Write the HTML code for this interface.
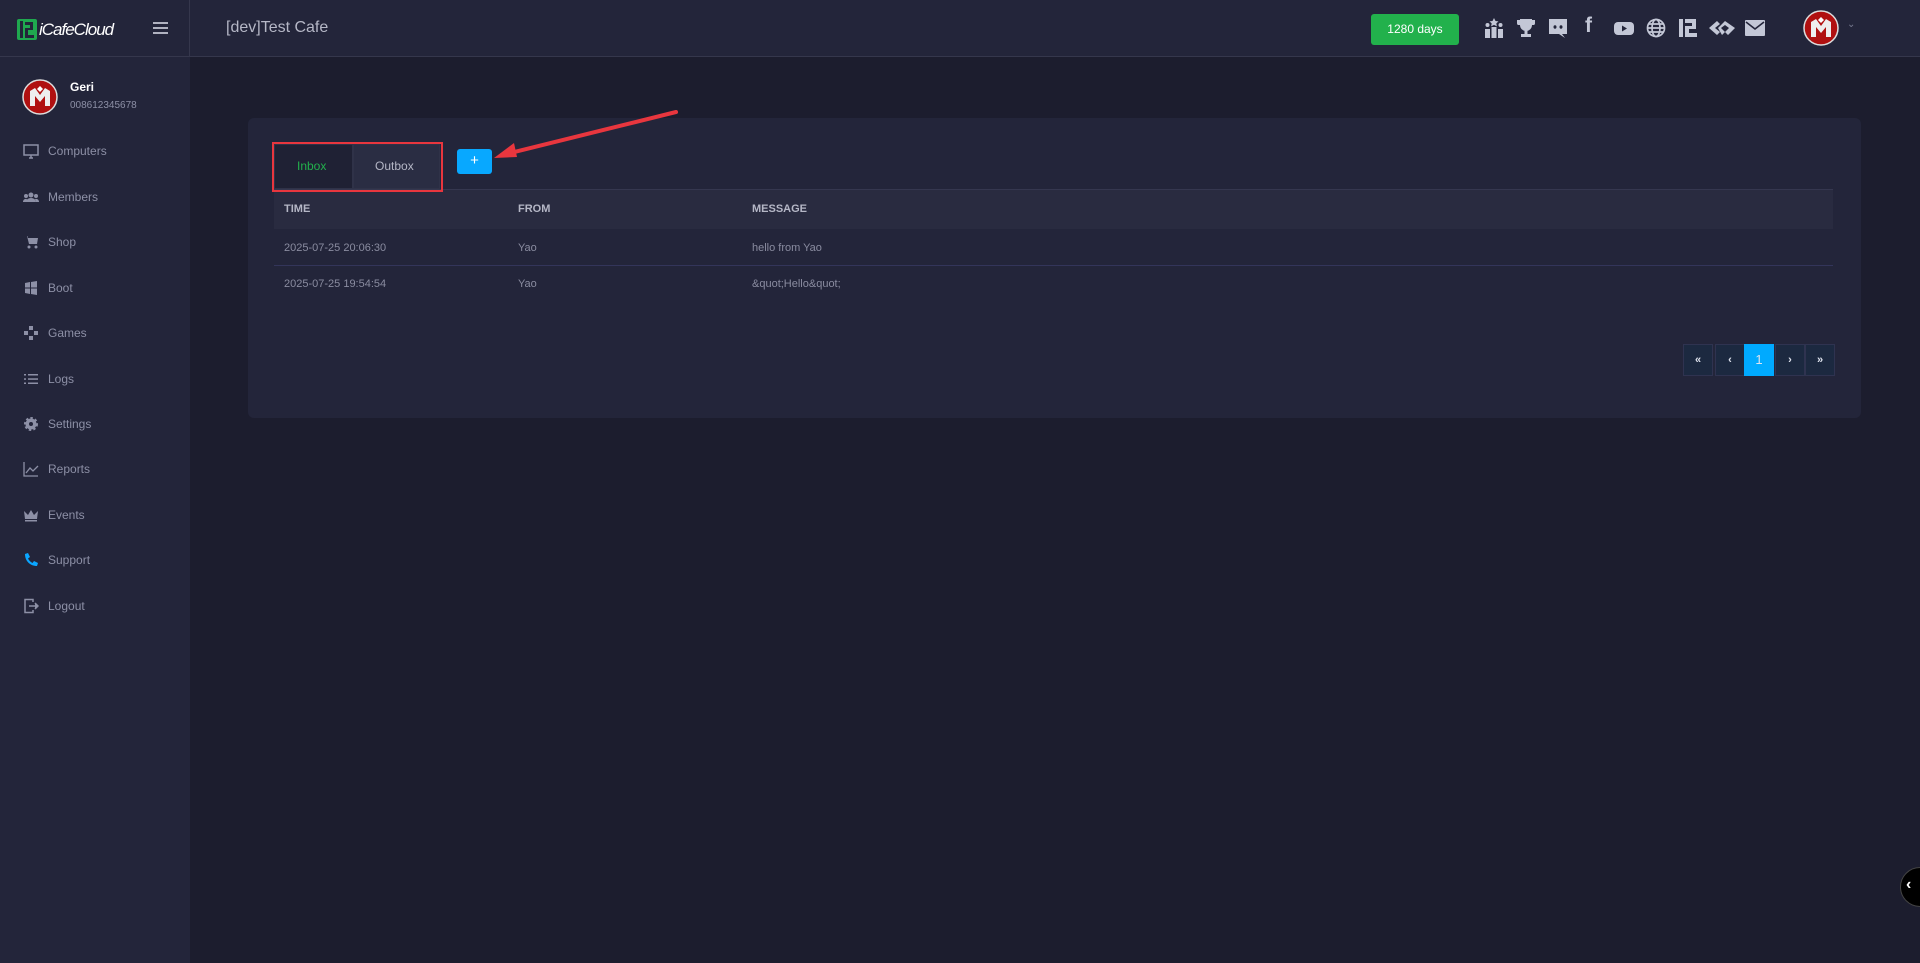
<!DOCTYPE html>
<html><head><meta charset="utf-8"><style>
*{margin:0;padding:0;box-sizing:border-box}
body{width:1920px;height:963px;background:#1c1d2e;font-family:"Liberation Sans",sans-serif;position:relative;overflow:hidden;color:#9a9cab}
.hdr{position:absolute;left:0;top:0;width:1920px;height:57px;background:#23253a;border-bottom:1px solid #35374c}
.sb{position:absolute;left:0;top:57px;width:190px;height:906px;background:#23253a}
.vline{position:absolute;left:189px;top:0;width:1px;height:57px;background:#35374c}
.abs{position:absolute}
.mi{position:absolute;left:23px;font-size:12px;color:#8d90a6;display:flex;align-items:center}
.mi svg{width:16px;height:16px;margin-right:9px}
.card{position:absolute;left:248px;top:118px;width:1613px;height:300px;background:#23253a;border-radius:6px}
.th{position:absolute;font-size:11px;font-weight:bold;color:#b5b7c6}
.td{position:absolute;font-size:11px;color:#8a8ca0}
.pg{position:absolute;top:344px;width:30px;height:32px;background:#1c2940;border:1px solid #2f3350;color:#dfe3ee;font-size:11px;text-align:center;line-height:30px;font-weight:bold}
.ic{position:absolute;top:17px;width:22px;height:22px}
</style></head><body>
<div class="hdr"></div>
<div class="vline"></div>
<div class="sb"></div>
<svg class="abs" style="left:17px;top:19px" width="20" height="21" viewBox="0 0 20 21"><rect x="0" y="0" width="20" height="21" rx="2" fill="#1fa84f"/><rect x="3" y="2" width="3" height="17" fill="#23253a"/><path d="M8 3h8v8h-5v5h6v3h-9v-10h5v-3h-5z" fill="#23253a"/></svg>
<div class="abs" style="left:39px;top:20px;font-size:17px;color:#fff;font-style:italic;letter-spacing:-1px">iCafeCloud</div>
<div class="abs" style="left:153px;top:22px;width:15px;height:2px;background:#b0b2c0;box-shadow:0 5px 0 #b0b2c0,0 10px 0 #b0b2c0"></div>
<div class="abs" style="left:226px;top:19px;font-size:16px;color:#b5b7c6">[dev]Test Cafe</div>
<div class="abs" style="left:1371px;top:14px;width:88px;height:31px;background:#22b14c;border-radius:3px;color:#fff;font-size:12px;text-align:center;line-height:31px">1280 days</div>
<svg class="ic" style="left:1483px" viewBox="0 0 22 22" fill="#c3c7d6"><rect x="2" y="12" width="5" height="9"/><rect x="8.5" y="10" width="5" height="11"/><rect x="15" y="12" width="5" height="9"/><path d="M11 1l1.5 3 3 .4-2.2 2 .6 3-2.9-1.5-2.9 1.5.6-3-2.2-2 3-.4z"/><circle cx="4.5" cy="8" r="2"/><circle cx="17.5" cy="8" r="2"/></svg>
<svg class="ic" style="left:1515px" viewBox="0 0 22 22" fill="#c3c7d6"><path d="M5 2h12v6a6 6 0 0 1-12 0z"/><path d="M2 3h3v5H3a2 2 0 0 1-1-2zM20 3h-3v5h2a2 2 0 0 0 1-2z"/><rect x="9.5" y="13" width="3" height="4"/><rect x="6" y="17" width="10" height="3"/></svg>
<svg class="ic" style="left:1547px" viewBox="0 0 22 22"><path d="M2 2h18v15h-5l3 4-6-4H2z" fill="#c3c7d6"/><ellipse cx="8" cy="10" rx="1.5" ry="1.7" fill="#23253a"/><ellipse cx="14" cy="10" rx="1.5" ry="1.7" fill="#23253a"/></svg>
<div class="abs" style="left:1585px;top:14px;font-size:21px;font-weight:bold;color:#c3c7d6">f</div>
<svg class="ic" style="left:1613px" viewBox="0 0 22 22"><rect x="1" y="5" width="20" height="13" rx="4" fill="#c3c7d6"/><path d="M9 8.5v6l5-3z" fill="#23253a"/></svg>
<svg class="ic" style="left:1645px" viewBox="0 0 22 22" fill="none" stroke="#c3c7d6" stroke-width="1.7"><circle cx="11" cy="11" r="8.5"/><ellipse cx="11" cy="11" rx="4" ry="8.5"/><path d="M2.5 11h17M4 7h14M4 15h14"/></svg>
<svg class="ic" style="left:1677px" viewBox="0 0 22 22" fill="#c3c7d6"><rect x="2" y="2" width="4" height="18"/><path d="M8 2h11v10h-7v4h8v4h-12v-11h7v-3h-7z"/></svg>
<svg class="ic" style="left:1708px;width:28px" viewBox="0 0 28 22" fill="#c3c7d6"><path d="M1 11l8-7 3 3-5 4 5 4-3 3z"/><path d="M10 11l7-7 10 7-7 7-3-3 4-4-4-3-4 3 4 4-3 3z"/></svg>
<svg class="ic" style="left:1744px" viewBox="0 0 22 22"><rect x="1" y="3" width="20" height="16" rx="1" fill="#c3c7d6"/><path d="M2 5l9 7 9-7" fill="none" stroke="#23253a" stroke-width="1.6"/></svg>
<svg class="abs" style="left:1803px;top:10px" width="36" height="36" viewBox="0 0 36 36"><circle cx="18" cy="18" r="17" fill="#b01010" stroke="#ddd" stroke-width="1.5"/><path d="M8 27V12l5-3 5 7 5-7 5 3v15h-5V17l-5 6-5-6v10z" fill="#eee"/><path d="M18 7l3 3-3 3-3-3z" fill="#fff"/></svg>
<div class="abs" style="left:1847px;top:19px;color:#777a90;font-size:10px">&#8964;</div>
<svg class="abs" style="left:22px;top:79px" width="36" height="36" viewBox="0 0 36 36"><circle cx="18" cy="18" r="17" fill="#b01010" stroke="#ddd" stroke-width="1.5"/><path d="M8 27V12l5-3 5 7 5-7 5 3v15h-5V17l-5 6-5-6v10z" fill="#eee"/><path d="M18 7l3 3-3 3-3-3z" fill="#fff"/></svg>
<div class="abs" style="left:70px;top:80px;font-size:12px;font-weight:bold;color:#fff">Geri</div>
<div class="abs" style="left:70px;top:100px;font-size:10px;color:#8d90a6">008612345678</div>
<div class="mi" style="top:143px"><svg viewBox="0 0 16 16" fill="none" stroke="#8d90a6" stroke-width="1.5"><rect x="1" y="2" width="14" height="10"/><path d="M6 15h4M8 12v3"/></svg>Computers</div>
<div class="mi" style="top:189px"><svg viewBox="0 0 16 16" fill="#8d90a6"><circle cx="8" cy="6" r="2.5"/><circle cx="3" cy="7" r="2"/><circle cx="13" cy="7" r="2"/><path d="M3 13a5 4 0 0 1 10 0zM0 13a3 3 0 0 1 4-3l-1 3zM16 13a3 3 0 0 0-4-3l1 3z"/></svg>Members</div>
<div class="mi" style="top:234px"><svg viewBox="0 0 16 16" fill="#8d90a6"><path d="M1 2h3l2 8h8l1-6H5l-.5-2z"/><circle cx="6" cy="13" r="1.5"/><circle cx="13" cy="13" r="1.5"/></svg>Shop</div>
<div class="mi" style="top:280px"><svg viewBox="0 0 16 16" fill="#8d90a6"><path d="M2 3l5-1v5.5H2zM8 2l6-1v6.5H8zM2 8.5h5V14l-5-1zM8 8.5h6V15l-6-1z"/></svg>Boot</div>
<div class="mi" style="top:325px"><svg viewBox="0 0 16 16" fill="#8d90a6"><rect x="6" y="1" width="4" height="4"/><rect x="6" y="11" width="4" height="4"/><rect x="1" y="6" width="4" height="4"/><rect x="11" y="6" width="4" height="4"/></svg>Games</div>
<div class="mi" style="top:371px"><svg viewBox="0 0 16 16" fill="#8d90a6"><rect x="1" y="3" width="2" height="1.5"/><rect x="5" y="3" width="10" height="1.5"/><rect x="1" y="7.3" width="2" height="1.5"/><rect x="5" y="7.3" width="10" height="1.5"/><rect x="1" y="11.5" width="2" height="1.5"/><rect x="5" y="11.5" width="10" height="1.5"/></svg>Logs</div>
<div class="mi" style="top:416px"><svg viewBox="0 0 16 16"><circle cx="8" cy="8" r="5.5" fill="#8d90a6" stroke="#8d90a6" stroke-width="3" stroke-dasharray="2.2 2"/><circle cx="8" cy="8" r="2" fill="#23253a"/></svg>Settings</div>
<div class="mi" style="top:461px"><svg viewBox="0 0 16 16" fill="none" stroke="#8d90a6" stroke-width="1.3"><path d="M1 1v14h14M3 12l4-5 3 3 5-5"/></svg>Reports</div>
<div class="mi" style="top:507px"><svg viewBox="0 0 16 16" fill="#8d90a6"><path d="M1 4l4 4 3-5 3 5 4-4-1 8H2z"/><rect x="2" y="13" width="12" height="1.5"/></svg>Events</div>
<div class="mi" style="top:552px;"><svg viewBox="0 0 16 16" fill="#0aa6ff"><path d="M2 2l3-1 2 4-2 1.5c1 2 2.5 3.5 4.5 4.5L11 9l4 2-1 3c-7 0-12-5-12-12z"/></svg>Support</div>
<div class="mi" style="top:598px"><svg viewBox="0 0 16 16" fill="none" stroke="#8d90a6" stroke-width="1.5"><path d="M10 4V1.5H2v13h8V12"/><path d="M6 8h9M12 5l3 3-3 3" fill="#8d90a6"/></svg>Logout</div>
<div class="card"></div>
<div class="abs" style="left:274px;top:189px;width:1559px;height:1px;background:#35374f"></div>
<div class="abs" style="left:274px;top:190px;width:1559px;height:39px;background:#292b40"></div>
<div class="abs" style="left:274px;top:144px;width:79px;height:45px;background:#1f2134;border:1px solid #2f3248"></div>
<div class="abs" style="left:353px;top:144px;width:87px;height:45px;background:#2a2d43;border:1px solid #2f3248"></div>
<div class="abs" style="left:272px;top:142px;width:171px;height:50px;border:2px solid #e8363e;z-index:5"></div>
<div class="abs" style="left:297px;top:159px;font-size:12px;color:#22b14c">Inbox</div>
<div class="abs" style="left:375px;top:159px;font-size:12px;color:#b5b7c6">Outbox</div>
<div class="abs" style="left:457px;top:149px;width:35px;height:25px;background:#08a8ff;border-radius:3px;color:#fff;text-align:center;line-height:24px;font-size:15px">+</div>
<svg class="abs" style="left:480px;top:100px" width="220" height="70"><path d="M196 12L22 55" stroke="#e8363e" stroke-width="4" stroke-linecap="round"/><path d="M14 58l20-15 3 14z" fill="#e8363e"/></svg>
<div class="th" style="left:284px;top:203px">TIME</div>
<div class="th" style="left:518px;top:203px">FROM</div>
<div class="th" style="left:752px;top:203px">MESSAGE</div>
<div class="td" style="left:284px;top:242px">2025-07-25 20:06:30</div>
<div class="td" style="left:518px;top:242px">Yao</div>
<div class="td" style="left:752px;top:242px">hello from Yao</div>
<div class="abs" style="left:274px;top:265px;width:1559px;height:1px;background:#33355a"></div>
<div class="td" style="left:284px;top:278px">2025-07-25 19:54:54</div>
<div class="td" style="left:518px;top:278px">Yao</div>
<div class="td" style="left:752px;top:278px">&amp;quot;Hello&amp;quot;</div>
<div class="pg" style="left:1683px">«</div>
<div class="pg" style="left:1715px">‹</div>
<div class="pg" style="left:1744px;background:#00aaff;border-color:#00aaff;font-size:13px;font-weight:normal">1</div>
<div class="pg" style="left:1775px">›</div>
<div class="pg" style="left:1805px">»</div>
<div class="abs" style="left:1900px;top:867px;width:40px;height:40px;border-radius:50%;background:#000;border:1px solid #444"></div>
<div class="abs" style="left:1906px;top:876px;color:#fff;font-size:16px;font-weight:bold">‹</div>
</body></html>
